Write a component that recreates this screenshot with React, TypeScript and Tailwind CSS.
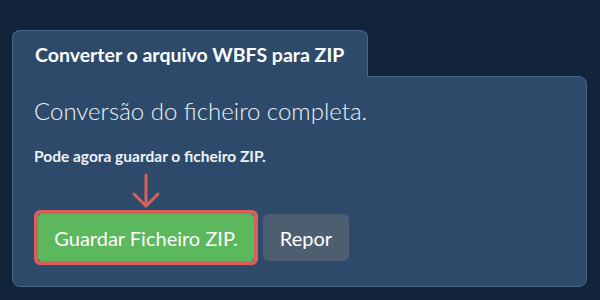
export default function App() {
  return (
    <div
      className="w-[600px] h-[300px] bg-[#12243a] pt-[30px] pl-[12px] pr-[13px]"
      style={{ fontFamily: "Lato, 'Noto Sans', sans-serif" }}
    >
      <div className="relative z-10 -mb-px inline-block h-[47px] w-[356px] rounded-t-lg border border-b-0 border-[#4a6788] bg-[#2d4a6b] pl-[22px] pt-[10px]">
        <span className="text-[19.5px] font-bold leading-[28px] text-white">Converter o arquivo WBFS para ZIP</span>
      </div>
      <div className="h-[211px] rounded-tr-lg rounded-b-lg border border-[#4a6788] bg-[#2d4a6b] pl-[21px] pt-[18px]">
        <div className="text-[24px] font-light leading-[32px] text-[#eef2f6]">Conversão do ficheiro completa.</div>
        <div className="mt-[19px] text-[15.5px] font-bold leading-[20px] text-[#eef2f6]">Pode agora guardar o ficheiro ZIP.</div>
        <div className="flex h-[44px] w-[224px] items-start justify-center pt-[7px]">
          <svg width="30" height="36" viewBox="0 0 30 36" fill="none" stroke="#d9605a" strokeWidth="3" strokeLinecap="round" strokeLinejoin="round">
            <path d="M15 2 V32" />
            <path d="M3 21 L15 33 L27 21" />
          </svg>
        </div>
        <div className="flex items-center gap-[5px]">
          <div className="rounded-md border-4 border-[#d9605a]">
            <button className="flex h-[47px] w-[216px] items-center justify-center rounded-sm bg-[#5cb85c] text-[20px] text-white">
              Guardar Ficheiro ZIP.
            </button>
          </div>
          <button className="flex h-[47px] w-[86px] items-center justify-center rounded-md bg-[#4d5e70] text-[20px] text-white">
            Repor
          </button>
        </div>
      </div>
    </div>
  );
}
